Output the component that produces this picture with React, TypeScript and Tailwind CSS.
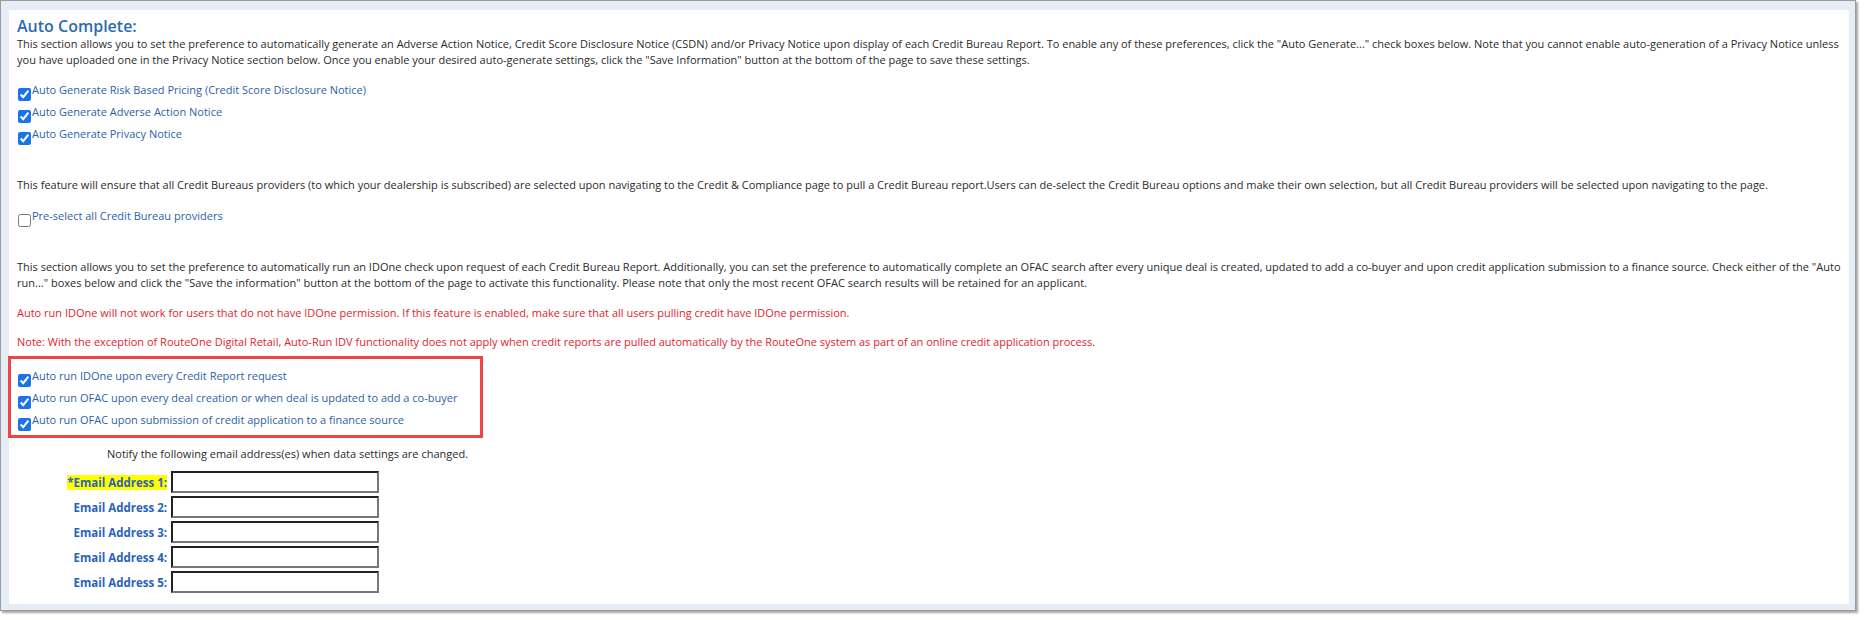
import * as React from 'react';

const font = { fontFamily: '"Open Sans", "Liberation Sans", sans-serif' };

interface CheckRowProps {
    label: string,
    checked?: boolean
}

const CheckRow: React.FC<CheckRowProps> = ({ label, checked = true }) => {
    return (
        <div className="flex items-start h-[22px]">
            <input
                type="checkbox"
                defaultChecked={checked}
                className="w-[13px] h-[13px] m-0 mt-[6px] ml-[1px] mr-[1px] accent-[#1a73e8] shrink-0"
            />
            <span className="text-[11px] leading-[16px] text-[#2d5fa8]">{label}</span>
        </div>
    );
}

const EmailRow: React.FC<{ n: number, required?: boolean }> = ({ n, required }) => {
    return (
        <div className="flex items-center h-[22px]">
            <div className="w-[159px] flex justify-end pr-[1px]">
                <span className={`text-[11.5px] leading-[15px] font-bold text-[#2a62bd] ${required ? 'bg-[#ffff00]' : ''}`}>
                    {required ? '*' : ''}Email Address {n}:
                </span>
            </div>
            <input
                type="text"
                className="ml-[3px] w-[208px] h-[22px] border-2 border-t-[#222] border-l-[#222] border-b-[#777] border-r-[#777] bg-white outline-none"
            />
        </div>
    );
}

export default function App() {
    return (
        <div className="w-[1867px] h-[620px] bg-white" style={font}>
            <div className="w-[1856px] h-[611px] flex border border-[#9c9c9c] bg-[#e7edf6] pt-[9px] pl-[8px] pr-[6px] pb-[6px] shadow-[2px_2px_2px_rgba(0,0,0,0.35)]">
                <div className="flex-1 bg-white pl-[8px] pt-[6px] text-[11px] leading-[16px] text-[#2b2b2b]">
                    <h2 className="text-[16px] leading-[20px] font-semibold text-[#2d6ab4]">Auto Complete:</h2>
                    <p>
                        This section allows you to set the preference to automatically generate an Adverse Action Notice, Credit Score Disclosure Notice (CSDN) and/or Privacy Notice upon display of each Credit Bureau Report. To enable any of these preferences, click the "Auto Generate..." check boxes below. Note that you cannot enable auto-generation of a Privacy Notice unless
                        <br />
                        you have uploaded one in the Privacy Notice section below. Once you enable your desired auto-generate settings, click the "Save Information" button at the bottom of the page to save these settings.
                    </p>

                    <div className="mt-[14px]">
                        <CheckRow label="Auto Generate Risk Based Pricing (Credit Score Disclosure Notice)" />
                        <CheckRow label="Auto Generate Adverse Action Notice" />
                        <CheckRow label="Auto Generate Privacy Notice" />
                    </div>

                    <p className="mt-[29px]">
                        This feature will ensure that all Credit Bureaus providers (to which your dealership is subscribed) are selected upon navigating to the Credit &amp; Compliance page to pull a Credit Bureau report.Users can de-select the Credit Bureau options and make their own selection, but all Credit Bureau providers will be selected upon navigating to the page.
                    </p>

                    <div className="mt-[15px]">
                        <CheckRow label="Pre-select all Credit Bureau providers" checked={false} />
                    </div>

                    <p className="mt-[29px]">
                        This section allows you to set the preference to automatically run an IDOne check upon request of each Credit Bureau Report. Additionally, you can set the preference to automatically complete an OFAC search after every unique deal is created, updated to add a co-buyer and upon credit application submission to a finance source. Check either of the "Auto
                        <br />
                        run..." boxes below and click the "Save the information" button at the bottom of the page to activate this functionality. Please note that only the most recent OFAC search results will be retained for an applicant.
                    </p>

                    <p className="mt-[14px] text-[#e3232d]">
                        Auto run IDOne will not work for users that do not have IDOne permission. If this feature is enabled, make sure that all users pulling credit have IDOne permission.
                    </p>
                    <p className="mt-[13px] text-[#e3232d]">
                        Note: With the exception of RouteOne Digital Retail, Auto-Run IDV functionality does not apply when credit reports are pulled automatically by the RouteOne system as part of an online credit application process.
                    </p>

                    <div className="mt-[6px] -ml-[9px] w-[475px] border-[3px] border-[#ef4444] pl-[6px] pt-[9px] pb-[1px]">
                        <CheckRow label="Auto run IDOne upon every Credit Report request" />
                        <CheckRow label="Auto run OFAC upon every deal creation or when deal is updated to add a co-buyer" />
                        <CheckRow label="Auto run OFAC upon submission of credit application to a finance source" />
                    </div>

                    <p className="mt-[8px] pl-[90px]">Notify the following email address(es) when data settings are changed.</p>

                    <div className="mt-[9px] -ml-[8px] flex flex-col gap-[3px]">
                        <EmailRow n={1} required />
                        <EmailRow n={2} />
                        <EmailRow n={3} />
                        <EmailRow n={4} />
                        <EmailRow n={5} />
                    </div>
                </div>
            </div>
        </div>
    );
}
